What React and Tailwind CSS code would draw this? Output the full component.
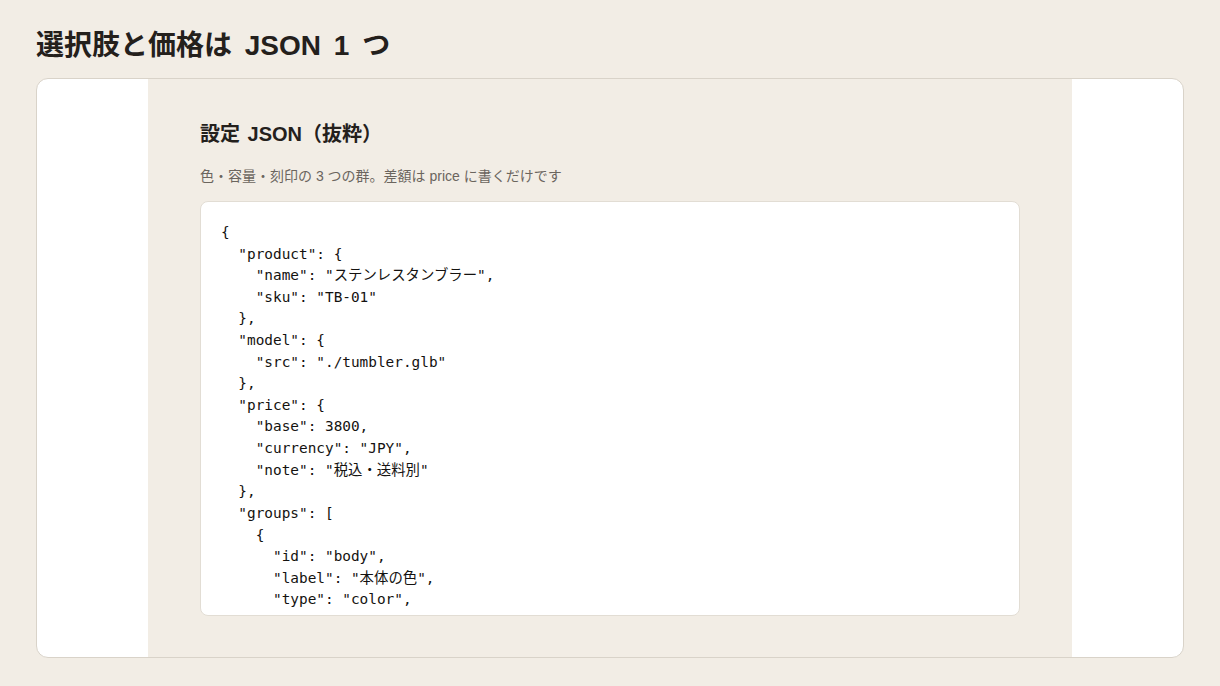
import React from 'react';

const code = `{
  "product": {
    "name": "ステンレスタンブラー",
    "sku": "TB-01"
  },
  "model": {
    "src": "./tumbler.glb"
  },
  "price": {
    "base": 3800,
    "currency": "JPY",
    "note": "税込・送料別"
  },
  "groups": [
    {
      "id": "body",
      "label": "本体の色",
      "type": "color",
      "options": [
        { "id": "silver", "label": "シルバー", "delta": 0 }
      ]
    }
  ]
}`;

const App = () => {
  return (
    <div className="min-h-[686px] bg-[#f2ede5] px-9 pt-[29px] text-[#24201c] font-['Liberation_Sans','Noto_Sans_CJK_JP',sans-serif]">
      {/* Page title */}
      <h1 className="text-[28px] leading-[34px] font-bold mb-[15px] [word-spacing:5px]">選択肢と価格は JSON 1 つ</h1>

      {/* Card */}
      <div className="h-[580px] bg-white border border-[#d9d3c9] rounded-xl overflow-hidden flex justify-center">
        <div className="w-[924px] h-full bg-[#f2ede5] px-[52px] pt-[41px] pb-[41px] flex flex-col">
          <h2 className="text-[20px] leading-[28px] font-bold [word-spacing:2px]">設定 JSON（抜粋）</h2>
          <p className="mt-[18px] text-[14px] leading-[20px] text-[#6b655e]">
            色・容量・刻印の 3 つの群。差額は price に書くだけです
          </p>
          <div className="mt-[15px] flex-1 min-h-0 bg-white border border-[#e2ddd4] rounded-lg px-5 pt-5 overflow-hidden">
            <pre className="text-[14.4px] leading-[1.5] text-[#141210] font-['DejaVu_Sans_Mono','Noto_Sans_CJK_JP',monospace]">
              {code}
            </pre>
          </div>
        </div>
      </div>
    </div>
  );
};

export default App;
